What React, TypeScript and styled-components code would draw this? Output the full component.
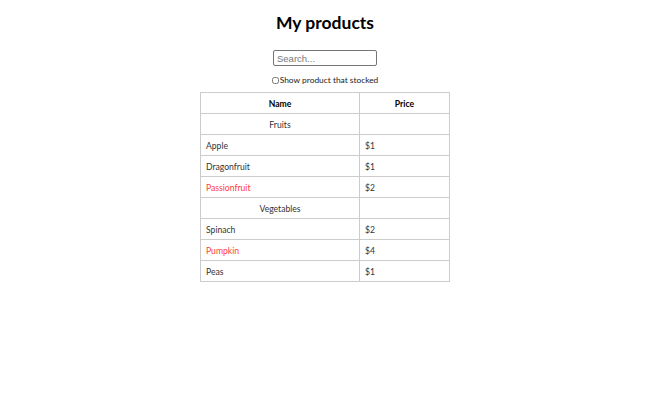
import styled, { createGlobalStyle } from "styled-components";

const GlobalStyle = createGlobalStyle`
    body {
        margin: 0;
        background: #fff;
        font-family: Lato, "Noto Sans", sans-serif;
        color: #333;
    }
`;

const Page = styled.div`
    display: flex;
    flex-direction: column;
    align-items: center;
    padding-top: 12px;
`;

const Title = styled.h1`
    margin: 0;
    font-size: 17.5px;
    line-height: 22px;
    font-weight: 700;
    color: #000;
`;

const SearchInput = styled.input`
    margin-top: 16px;
    width: 104px;
    height: 16px;
    box-sizing: border-box;
    border: 1px solid #767676;
    border-radius: 2px;
    padding: 0 3px;
    font-family: "Liberation Sans", Arial, sans-serif;
    font-size: 9.5px;
    color: #333;

    &::placeholder {
        color: #777;
    }
`;

const StockLabel = styled.label`
    margin-top: 8px;
    display: flex;
    align-items: center;
    gap: 1px;
    font-size: 8.4px;
    line-height: 12px;
    color: #222;
`;

const CheckBox = styled.input`
    margin: 0;
    width: 7px;
    height: 7px;
`;

const ProductTable = styled.table`
    margin-top: 6px;
    width: 249px;
    border-collapse: collapse;
    table-layout: fixed;
    font-size: 8.6px;

    th, td {
        border: 1px solid #ccc;
        height: 21px;
        box-sizing: border-box;
        padding: 2px 5px 0;
    }

    th {
        font-weight: 700;
        color: #000;
        text-align: center;
    }
`;

const CategoryCell = styled.td`
    text-align: center;
`;

const NameCell = styled.td<{ $stocked: boolean }>`
    color: ${props => (props.$stocked ? "#333" : "#ff3b3b")};
`;

type Product = { category: string; price: string; stocked: boolean; name: string };

const PRODUCTS: Product[] = [
    { category: "Fruits", price: "$1", stocked: true, name: "Apple" },
    { category: "Fruits", price: "$1", stocked: true, name: "Dragonfruit" },
    { category: "Fruits", price: "$2", stocked: false, name: "Passionfruit" },
    { category: "Vegetables", price: "$2", stocked: true, name: "Spinach" },
    { category: "Vegetables", price: "$4", stocked: false, name: "Pumpkin" },
    { category: "Vegetables", price: "$1", stocked: true, name: "Peas" },
];

export default function App() {
    const rows: JSX.Element[] = [];
    let lastCategory = "";
    PRODUCTS.forEach(product => {
        if (product.category !== lastCategory) {
            rows.push(
                <tr key={product.category}>
                    <CategoryCell>{product.category}</CategoryCell>
                    <td></td>
                </tr>
            );
            lastCategory = product.category;
        }
        rows.push(
            <tr key={product.name}>
                <NameCell $stocked={product.stocked}>{product.name}</NameCell>
                <td>{product.price}</td>
            </tr>
        );
    });

    return (
        <>
            <GlobalStyle />
            <Page>
                <Title>My products</Title>
                <SearchInput placeholder="Search..." />
                <StockLabel>
                    <CheckBox type="checkbox" />
                    Show product that stocked
                </StockLabel>
                <ProductTable>
                    <colgroup>
                        <col style={{ width: 159 }} />
                        <col style={{ width: 90 }} />
                    </colgroup>
                    <thead>
                        <tr>
                            <th>Name</th>
                            <th>Price</th>
                        </tr>
                    </thead>
                    <tbody>{rows}</tbody>
                </ProductTable>
            </Page>
        </>
    );
}
